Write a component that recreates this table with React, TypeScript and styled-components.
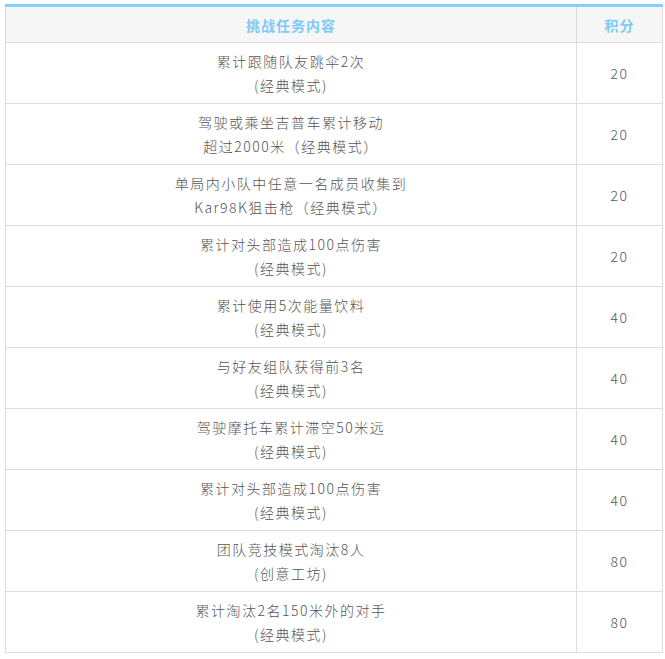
import styled, { createGlobalStyle } from 'styled-components';

type Task = {
  lines: string[];
  points: number;
};

const tasks: Task[] = [
  { lines: ['累计跟随队友跳伞2次', '(经典模式)'], points: 20 },
  { lines: ['驾驶或乘坐吉普车累计移动', '超过2000米（经典模式）'], points: 20 },
  { lines: ['单局内小队中任意一名成员收集到', 'Kar98K狙击枪（经典模式）'], points: 20 },
  { lines: ['累计对头部造成100点伤害', '(经典模式)'], points: 20 },
  { lines: ['累计使用5次能量饮料', '(经典模式)'], points: 40 },
  { lines: ['与好友组队获得前3名', '(经典模式)'], points: 40 },
  { lines: ['驾驶摩托车累计滞空50米远', '(经典模式)'], points: 40 },
  { lines: ['累计对头部造成100点伤害', '(经典模式)'], points: 40 },
  { lines: ['团队竞技模式淘汰8人', '(创意工坊)'], points: 80 },
  { lines: ['累计淘汰2名150米外的对手', '(经典模式)'], points: 80 },
];

const App: React.FC = () => {
  return (
    <>
      <GlobalStyle />
      <Page>
        <Table>
          <colgroup>
            <col style={{ width: 571 }} />
            <col style={{ width: 86 }} />
          </colgroup>
          <thead>
            <tr>
              <HeadCell>挑战任务内容</HeadCell>
              <HeadCell>积分</HeadCell>
            </tr>
          </thead>
          <tbody>
            {tasks.map((task, i) => (
              <tr key={i}>
                <Cell>
                  {task.lines.map((line, j) => (
                    <Line key={j}>{line}</Line>
                  ))}
                </Cell>
                <Cell>{task.points}</Cell>
              </tr>
            ))}
          </tbody>
        </Table>
      </Page>
    </>
  );
};

export default App;

const GlobalStyle = createGlobalStyle`
  body {
    margin: 0;
    background: #fff;
    font-family: "Noto Sans CJK SC", "Noto Sans", sans-serif;
  }
`;

const Page = styled.div`
  padding: 4px 3px 0 5px;
`;

const Table = styled.table`
  width: 657px;
  border-collapse: collapse;
  table-layout: fixed;
  border-top: 3px solid #80cffc;
`;

const HeadCell = styled.th`
  height: 35px;
  padding: 0;
  background: #f6f6f6;
  border: 1px solid #dddddd;
  border-top: none;
  color: #7ccaf6;
  font-size: 14px;
  font-weight: bold;
  letter-spacing: 1px;
  text-align: center;
  vertical-align: middle;
`;

const Cell = styled.td`
  height: 60px;
  padding: 0;
  border: 1px solid #dddddd;
  color: #555555;
  font-size: 14px;
  font-weight: 300;
  letter-spacing: 1.5px;
  text-align: center;
  vertical-align: middle;
`;

const Line = styled.div`
  line-height: 24px;
`;
